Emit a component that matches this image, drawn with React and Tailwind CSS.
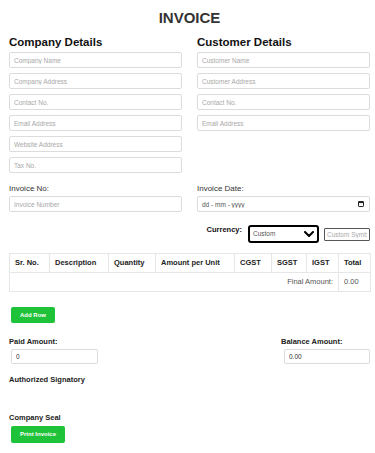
import React from "react";

const baseCls =
  "block w-full h-[16px] border border-[#dcdcdc] rounded-[2px] px-[4px] text-[6.5px] text-[#333] bg-white outline-none";
const inputCls = baseCls + " placeholder:text-[#a8a8a8]";

function Field({ placeholder }) {
  return <input className={inputCls} placeholder={placeholder} />;
}

export default function App() {
  const cols = [40, 59, 47, 79, 37, 35, 32, 32];
  const heads = ["Sr. No.", "Description", "Quantity", "Amount per Unit", "CGST", "SGST", "IGST", "Total"];
  return (
    <div className="w-[375px] min-h-[453px] bg-white pl-[9px] pr-[5px] font-['Liberation_Sans',Arial,sans-serif] text-[#222]">
      <h1 className="pt-[10px] h-[25px] text-center text-[15px] leading-[15px] font-bold text-[#333]">INVOICE</h1>

      <div className="mt-[11px] flex justify-between">
        <div className="w-[173px]">
          <h2 className="h-[12px] text-[11.5px] leading-[12px] font-bold text-[#111]">Company Details</h2>
          <div className="mt-[4px] flex flex-col gap-[5px]">
            <Field placeholder="Company Name" />
            <Field placeholder="Company Address" />
            <Field placeholder="Contact No." />
            <Field placeholder="Email Address" />
            <Field placeholder="Website Address" />
            <Field placeholder="Tax No." />
          </div>
        </div>
        <div className="w-[173px]">
          <h2 className="h-[12px] text-[11.5px] leading-[12px] font-bold text-[#111]">Customer Details</h2>
          <div className="mt-[4px] flex flex-col gap-[5px]">
            <Field placeholder="Customer Name" />
            <Field placeholder="Customer Address" />
            <Field placeholder="Contact No." />
            <Field placeholder="Email Address" />
          </div>
        </div>
      </div>

      <div className="mt-[11px] flex justify-between">
        <div className="w-[173px]">
          <label className="block h-[10px] text-[8px] leading-[10px] text-[#333]">Invoice No:</label>
          <input className={"mt-[2px] " + inputCls} placeholder="Invoice Number" />
        </div>
        <div className="w-[173px]">
          <label className="block h-[10px] text-[8px] leading-[10px] text-[#333]">Invoice Date:</label>
          <div className="relative mt-[2px]">
            <input className={baseCls + " placeholder:text-[#555]"} placeholder="dd - mm - yyyy" />
            <svg className="pointer-events-none absolute right-[6px] top-[5px]" width="6" height="6" viewBox="0 0 6 6">
              <rect x="0.5" y="0.5" width="5" height="5" rx="0.6" fill="none" stroke="#222" strokeWidth="1" />
              <rect x="0.5" y="0.5" width="5" height="1.6" fill="#222" />
            </svg>
          </div>
        </div>
      </div>

      <div className="mt-[13px] flex justify-end items-center h-[18px]">
        <span className="self-start text-[7.5px] leading-[9px] font-bold text-[#111]">Currency:</span>
        <div className="relative ml-[6px] w-[71px] h-[18px]">
          <select className="block appearance-none w-full h-[18px] border-2 border-black rounded-[3px] bg-white pl-[3px] text-[6.5px] leading-[14px] text-[#555] outline-none">
            <option>Custom</option>
          </select>
          <svg className="pointer-events-none absolute right-[5px] top-[6px]" width="10" height="6" viewBox="0 0 10 6">
            <path d="M1 1 L5 5 L9 1" fill="none" stroke="#000" strokeWidth="2" strokeLinecap="round" strokeLinejoin="round" />
          </svg>
        </div>
        <input
          className="ml-[5px] w-[46px] h-[13px] border border-[#555] rounded-[1px] px-[2px] text-[6.5px] placeholder:text-[#aaa] outline-none"
          placeholder="Custom Symbol"
        />
      </div>

      <table className="mt-[10px] w-[361px] table-fixed border-collapse text-[7.5px]">
        <colgroup>
          {cols.map((w, i) => (
            <col key={i} style={{ width: w }} />
          ))}
        </colgroup>
        <thead>
          <tr className="h-[19px]">
            {heads.map((h) => (
              <th key={h} className="border border-[#e6e6e6] px-[5px] text-left font-bold text-[#222] whitespace-nowrap overflow-hidden">
                {h}
              </th>
            ))}
          </tr>
        </thead>
        <tbody>
          <tr className="h-[19px]">
            <td colSpan={7} className="border border-[#e6e6e6] pr-[5px] text-right text-[#555]">Final Amount:</td>
            <td className="border border-[#e6e6e6] px-[5px] text-[#555]">0.00</td>
          </tr>
        </tbody>
      </table>

      <button className="mt-[15px] ml-[2px] block w-[44px] h-[16px] rounded-[2px] bg-[#1fc33a] text-white text-[6px] font-bold">Add Row</button>

      <div className="mt-[14px] flex justify-between">
        <div>
          <label className="block h-[9px] text-[7.5px] leading-[9px] font-bold text-[#222]">Paid Amount:</label>
          <input className="mt-[3px] ml-[2px] block w-[87px] h-[15px] border border-[#dcdcdc] rounded-[2px] px-[4px] text-[6.5px] text-[#333] outline-none" defaultValue="0" />
        </div>
        <div className="w-[89px]">
          <label className="block h-[9px] text-[7.5px] leading-[9px] font-bold text-[#222]">Balance Amount:</label>
          <input className="mt-[3px] ml-[3px] block w-[86px] h-[15px] border border-[#dcdcdc] rounded-[2px] px-[4px] text-[6.5px] text-[#333] outline-none" defaultValue="0.00" readOnly />
        </div>
      </div>

      <p className="mt-[11px] h-[9px] text-[7.5px] leading-[9px] font-bold text-[#222]">Authorized Signatory</p>
      <p className="mt-[29px] h-[9px] text-[7.5px] leading-[9px] font-bold text-[#222]">Company Seal</p>
      <button className="mt-[4px] ml-[2px] block w-[54px] h-[17px] rounded-[2px] bg-[#1fc33a] text-white text-[6px] font-bold">Print Invoice</button>
    </div>
  );
}
